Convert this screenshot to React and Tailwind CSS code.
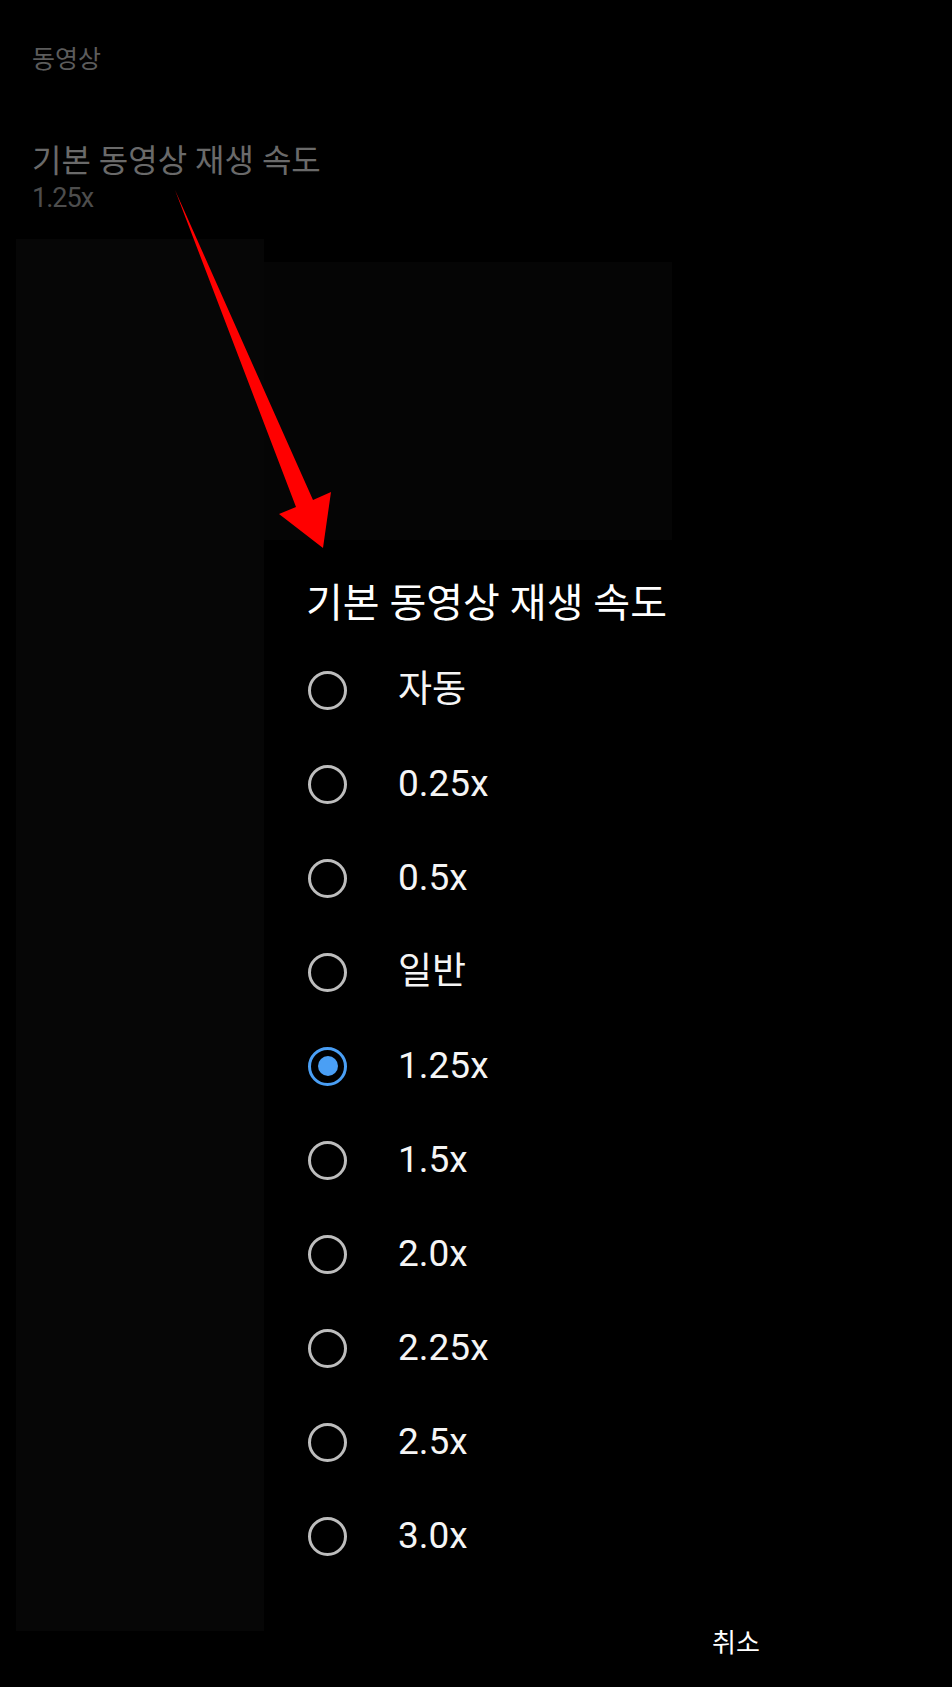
import { useState } from 'react'

const SPEEDS = ['자동', '0.25x', '0.5x', '일반', '1.25x', '1.5x', '2.0x', '2.25x', '2.5x', '3.0x']

const FONT = { fontFamily: 'Roboto, "Noto Sans CJK KR", sans-serif' }

function Radio({ checked }) {
  if (checked) {
    return (
      <span className="flex h-[39px] w-[39px] shrink-0 items-center justify-center rounded-full border-[3px] border-[#4a9ff5]">
        <span className="h-[20px] w-[20px] rounded-full bg-[#4a9ff5]" />
      </span>
    )
  }
  return <span className="h-[39px] w-[39px] shrink-0 rounded-full border-[3px] border-[#bdbdbd]" />
}

function Arrow() {
  return (
    <svg className="pointer-events-none absolute left-0 top-0" width="952" height="1687" viewBox="0 0 952 1687">
      <polygon points="175,190 313,500 331,492 323,548 279,514 296,507" fill="#ff0000" />
    </svg>
  )
}

export default function App() {
  const [speed, setSpeed] = useState('1.25x')

  return (
    <div className="relative h-[1687px] w-[952px] overflow-hidden bg-black" style={FONT}>
      <div className="h-[239px] px-8">
        <div className="pt-[43px] text-[25px] leading-[34px] text-[#5c5c5c]">동영상</div>
        <div className="mt-[64px] text-[32px] leading-[40px] text-[#6a6a6a]">기본 동영상 재생 속도</div>
        <div className="mt-[1px] text-[27px] leading-[32px] tracking-[-1px] text-[#4d4d4d]">1.25x</div>
      </div>

      <div className="flex">
        <div className="ml-4 h-[1392px] w-[248px] bg-[#060606]" />
        <div className="flex flex-1 flex-col">
          <div className="mt-[23px] h-[278px] w-[408px] bg-[#050505]" />
          <div className="flex-1 bg-black pl-[42px]">
            <div className="mt-[42px] mb-[17px] text-[40px] leading-[44px] text-white">기본 동영상 재생 속도</div>
            {SPEEDS.map(s => (
              <div key={s} className="flex h-[94px] cursor-pointer items-center pl-[2px]" onClick={() => setSpeed(s)}>
                <Radio checked={speed === s} />
                <span className="ml-[51px] text-[37px] text-[#f5f5f5]">{s}</span>
              </div>
            ))}
            <div className="mt-[44px] pl-[406px] text-[26px] leading-[32px] text-white">취소</div>
          </div>
        </div>
      </div>

      <Arrow />
    </div>
  )
}
